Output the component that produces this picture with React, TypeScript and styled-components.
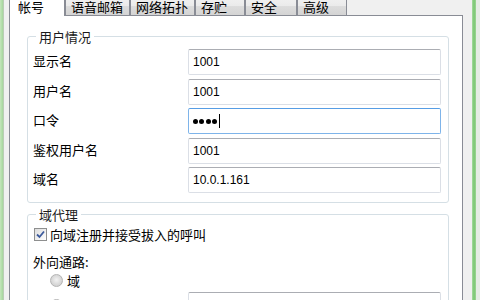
import React from 'react';
import styled, { createGlobalStyle } from 'styled-components';

const GlobalStyle = createGlobalStyle`
  html, body {
    margin: 0;
    padding: 0;
  }
  body {
    width: 480px;
    height: 300px;
    overflow: hidden;
    background: #f0f0f0;
    font-family: "Noto Sans CJK SC", "Noto Sans", sans-serif;
    font-size: 13px;
    color: #000;
  }
`;

const Screen = styled.div`
  display: flex;
  width: 480px;
  height: 300px;
  overflow: hidden;
  background: #f0f0f0;
`;

const LeftEdge = styled.div`
  flex: none;
  width: 3px;
  background: linear-gradient(to right, #c4e6bc, #a6d69d);
  border-right: 1px solid #b9cdb5;
`;

const RightEdge = styled.div`
  flex: none;
  width: 4px;
  margin-left: 9px;
  background: linear-gradient(to right, #a9dca2, #79c671, #9fd697);
  border-right: 4px solid #e6ece5;
`;

const Dialog = styled.div`
  flex: none;
  width: 454px;
  margin-left: 5px;
  display: flex;
  flex-direction: column;
`;

const TabRow = styled.div`
  display: flex;
  align-items: flex-end;
  height: 20px;
  margin-top: -5px;
  flex: none;
`;

const Tab = styled.div<{ $active?: boolean; $width: number }>`
  box-sizing: border-box;
  flex: none;
  height: ${(p) => (p.$active ? '21px' : '20px')};
  margin-bottom: ${(p) => (p.$active ? '-1px' : '0')};
  width: ${(p) => p.$width}px;
  padding: 3px 0 0 ${(p) => (p.$active ? '8px' : '5px')};
  line-height: 15px;
  white-space: nowrap;
  border: 1px solid #898c95;
  border-bottom: none;
  border-radius: 2px 2px 0 0;
  background: ${(p) =>
    p.$active ? '#ffffff' : 'linear-gradient(to bottom, #f2f2f2 0%, #ebebeb 50%, #dddddd 51%, #d4d4d4 100%)'};
  position: relative;
  z-index: ${(p) => (p.$active ? 1 : 0)};
`;

const Page = styled.div`
  flex: 1;
  background: #fff;
  border: 1px solid #898c95;
  border-bottom: none;
  padding: 13px 13px 0 17px;
`;

const GroupBox = styled.fieldset<{ $gap?: number; $top: number; $bottom: number }>`
  box-sizing: border-box;
  width: 422px;
  margin: 0 0 ${(p) => p.$gap ?? 0}px 0;
  padding: ${(p) => p.$top}px 7px ${(p) => p.$bottom}px 5px;
  border: 1px solid #d5dfe5;
  border-radius: 3px;
  min-inline-size: 0;
`;

const Legend = styled.legend`
  margin-left: 3px;
  padding: 0 3px;
  line-height: 15px;
  color: #1a1a1a;
`;

const FieldGrid = styled.div`
  display: grid;
  grid-template-columns: 155px 253px;
  row-gap: 3.5px;
  align-items: center;
`;

const Label = styled.div`
  line-height: 16px;
  padding-bottom: 2px;
`;

const TextBox = styled.div<{ $focused?: boolean }>`
  box-sizing: border-box;
  height: 26px;
  padding: 0 4px;
  display: flex;
  align-items: center;
  border: 1px solid ${(p) => (p.$focused ? '#7eb4ea' : '#dbdfe6')};
  border-top-color: ${(p) => (p.$focused ? '#569de5' : '#abadb3')};
  border-radius: 2px;
  font-family: "Liberation Sans", Arial, sans-serif;
  font-size: 12px;
  color: #000;
  background: #fff;
`;

const Dot = styled.span`
  display: inline-block;
  width: 5px;
  height: 5px;
  border-radius: 50%;
  background: #000;
  margin-right: 1.4px;
`;

const Caret = styled.span`
  display: inline-block;
  width: 1px;
  height: 14px;
  background: #000;
  margin-left: 0.5px;
`;

const ProxyBody = styled.div`
  display: flex;
  flex-direction: column;
`;

const CheckRow = styled.div`
  display: flex;
  align-items: center;
  gap: 3px;
  height: 18px;
  margin-left: 1px;
  white-space: nowrap;
`;

const CheckBox = styled.span`
  box-sizing: border-box;
  width: 13px;
  height: 13px;
  border: 1px solid #8e8f8f;
  background: linear-gradient(to bottom right, #dcdcdc, #ffffff);
  display: flex;
  align-items: center;
  justify-content: center;
`;

const Caption = styled.div`
  margin-top: 10px;
  line-height: 18px;
`;

const RadioRow = styled.div<{ $height: number }>`
  display: flex;
  align-items: center;
  height: ${(p) => p.$height}px;
  padding-left: 17px;
  white-space: nowrap;
`;

const Radio = styled.span`
  box-sizing: border-box;
  flex: none;
  width: 13px;
  height: 13px;
  border-radius: 50%;
  border: 1px solid #b4b4b4;
  background: radial-gradient(circle at 50% 45%, #f2f2f2 0%, #d9d9d9 55%, #c8c8c8 100%);
  margin-right: 4px;
`;

const Muted = styled.span`
  flex: none;
  color: #9a9a9a;
  margin-left: 37px;
  width: 58px;
`;

const AddressBox = styled(TextBox)`
  flex: none;
  width: 253px;
`;

const tabs = [
  { name: '帐号', width: 56 },
  { name: '语音邮箱', width: 65 },
  { name: '网络拓扑', width: 65 },
  { name: '存贮', width: 50 },
  { name: '安全', width: 52 },
  { name: '高级', width: 50 },
];

const fields = [
  { label: '显示名', value: '1001' },
  { label: '用户名', value: '1001' },
  { label: '口令', value: '', password: 4 },
  { label: '鉴权用户名', value: '1001' },
  { label: '域名', value: '10.0.1.161' },
];

export default function App() {
  return (
    <>
      <GlobalStyle />
      <Screen>
        <LeftEdge />
        <Dialog>
          <TabRow>
            {tabs.map((t, i) => (
              <Tab key={t.name} $active={i === 0} $width={t.width}>
                {t.name}
              </Tab>
            ))}
          </TabRow>
          <Page>
            <GroupBox $gap={4} $top={5} $bottom={9}>
              <Legend>用户情况</Legend>
              <FieldGrid>
                {fields.map((f) => (
                  <React.Fragment key={f.label}>
                    <Label>{f.label}</Label>
                    <TextBox $focused={!!f.password}>
                      {f.password ? (
                        <>
                          {Array.from({ length: f.password }).map((_, i) => (
                            <Dot key={i} />
                          ))}
                          <Caret />
                        </>
                      ) : (
                        f.value
                      )}
                    </TextBox>
                  </React.Fragment>
                ))}
              </FieldGrid>
            </GroupBox>
            <GroupBox $top={3} $bottom={6}>
              <Legend>域代理</Legend>
              <ProxyBody>
                <CheckRow>
                  <CheckBox>
                    <svg width="9" height="9" viewBox="0 0 9 9">
                      <path d="M1 4.5 L3.5 7 L8 1.5" fill="none" stroke="#3c5a9c" strokeWidth="1.8" />
                    </svg>
                  </CheckBox>
                  向域注册并接受拔入的呼叫
                </CheckRow>
                <Caption>外向通路:</Caption>
                <RadioRow $height={19}>
                  <Radio />域
                </RadioRow>
                <RadioRow $height={30}>
                  <Radio />代理
                  <Muted>地址</Muted>
                  <AddressBox />
                </RadioRow>
              </ProxyBody>
            </GroupBox>
          </Page>
        </Dialog>
        <RightEdge />
      </Screen>
    </>
  );
}
